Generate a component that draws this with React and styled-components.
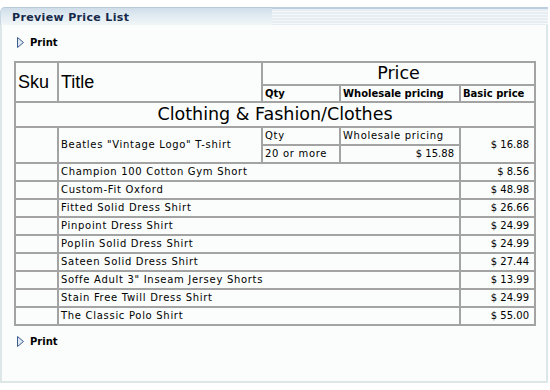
import React from "react";
import styled, { createGlobalStyle } from "styled-components";

const Global = createGlobalStyle`
  html, body { margin: 0; padding: 0; background: #ffffff; }
  body { font-family: "DejaVu Sans", Verdana, sans-serif; font-size: 10px; color: #000; }
`;

const Window = styled.div`
  width: 548px;
  margin-top: 7px;
`;

const Header = styled.div`
  display: flex;
  height: 18px;
`;

const Tab = styled.div`
  width: 272px;
  border-top-left-radius: 5px;
  border-top: 1px solid #b7cadc;
  border-left: 1px solid #c9d7e2;
  background: linear-gradient(#d0deea, #e4edf3 55%, #f1f6f7);
  display: flex;
  align-items: center;
  padding-left: 11px;
  box-sizing: border-box;
`;

const TitleText = styled.span`
  font-family: "DejaVu Sans", Verdana, sans-serif;
  font-weight: bold;
  font-size: 11px;
  letter-spacing: 0.35px;
  color: #16294a;
  margin-top: 1px;
`;

const Strip = styled.div`
  flex: 1;
  border-top: 2px solid #bccfe0;
  background: repeating-linear-gradient(
    #e6eef3 0px,
    #e6eef3 2px,
    #f5f8f9 2px,
    #f5f8f9 3px
  );
`;

const Body = styled.div`
  border: 2px solid #dde7e7;
  border-top: none;
  background: #fafdfb;
  padding: 10px 0 33px 12px;
`;

const PrintLink = styled.a`
  display: flex;
  align-items: center;
  gap: 6px;
  padding-left: 3px;
  height: 14px;
  font-weight: bold;
  font-size: 10px;
  color: #000;
  text-decoration: none;
  cursor: pointer;
`;

const Table = styled.table`
  table-layout: fixed;
  width: 522px;
  border-collapse: separate;
  border-spacing: 0;
  border: 1px solid #a3a3a3;
  margin: ${(p) => p.$margin || "0"};
`;

const Cell = styled.td`
  border: 1px solid #a3a3a3;
  padding: 1px ${(p) => (p.$right ? "5px" : "2px")};
  line-height: 14px;
  height: 14px;
  text-align: ${(p) => (p.$right ? "right" : "left")};
  letter-spacing: ${(p) => (p.$right ? "0" : "0.7px")};
  white-space: nowrap;
  overflow: hidden;
  font-size: 10px;
`;

const BigHead = styled.th`
  border: 1px solid #a3a3a3;
  font-family: ${(p) =>
    p.$center ? '"DejaVu Sans", Verdana, sans-serif' : '"Liberation Sans", Arial, sans-serif'};
  font-weight: normal;
  font-size: ${(p) => (p.$center ? "17.5px" : "18px")};
  line-height: ${(p) => (p.$lh ? p.$lh : "19px")};
  padding: 1px 2px;
  text-align: ${(p) => (p.$center ? "center" : "left")};
`;

const SmallHead = styled.th`
  border: 1px solid #a3a3a3;
  font-weight: bold;
  font-size: 10px;
  line-height: 13px;
  padding: 1px 2px;
  text-align: left;
  white-space: nowrap;
`;

const Arrow = () => (
  <svg width="7" height="11" viewBox="0 0 7 11">
    <path d="M0.5 0.5 L6.5 5.5 L0.5 10.5 Z" fill="#dfe8f3" stroke="#3d5d8c" strokeWidth="1" />
  </svg>
);

const products = [
  ["Champion 100 Cotton Gym Short", "$ 8.56"],
  ["Custom-Fit Oxford", "$ 48.98"],
  ["Fitted Solid Dress Shirt", "$ 26.66"],
  ["Pinpoint Dress Shirt", "$ 24.99"],
  ["Poplin Solid Dress Shirt", "$ 24.99"],
  ["Sateen Solid Dress Shirt", "$ 27.44"],
  ['Soffe Adult 3" Inseam Jersey Shorts', "$ 13.99"],
  ["Stain Free Twill Dress Shirt", "$ 24.99"],
  ["The Classic Polo Shirt", "$ 55.00"],
];

export default function App() {
  return (
    <>
      <Global />
      <Window>
        <Header>
          <Tab>
            <TitleText>Preview Price List</TitleText>
          </Tab>
          <Strip />
        </Header>
        <Body>
          <PrintLink>
            <Arrow />
            Print
          </PrintLink>
          <Table $margin="12px 0 8px 0">
            <colgroup>
              <col style={{ width: 43 }} />
              <col style={{ width: 204 }} />
              <col style={{ width: 78 }} />
              <col style={{ width: 120 }} />
              <col style={{ width: 75 }} />
            </colgroup>
            <thead>
              <tr>
                <BigHead rowSpan={2}>Sku</BigHead>
                <BigHead rowSpan={2}>Title</BigHead>
                <BigHead colSpan={3} $center>Price</BigHead>
              </tr>
              <tr>
                <SmallHead>Qty</SmallHead>
                <SmallHead>Wholesale pricing</SmallHead>
                <SmallHead>Basic price</SmallHead>
              </tr>
            </thead>
            <tbody>
              <tr>
                <BigHead colSpan={5} $center $lh="21px">Clothing &amp; Fashion/Clothes</BigHead>
              </tr>
              <tr>
                <Cell rowSpan={2} />
                <Cell rowSpan={2}>Beatles "Vintage Logo" T-shirt</Cell>
                <Cell>Qty</Cell>
                <Cell>Wholesale pricing</Cell>
                <Cell rowSpan={2} $right>$ 16.88</Cell>
              </tr>
              <tr>
                <Cell>20 or more</Cell>
                <Cell $right>$ 15.88</Cell>
              </tr>
              {products.map(([name, price]) => (
                <tr key={name}>
                  <Cell />
                  <Cell colSpan={3}>{name}</Cell>
                  <Cell $right>{price}</Cell>
                </tr>
              ))}
            </tbody>
          </Table>
          <PrintLink>
            <Arrow />
            Print
          </PrintLink>
        </Body>
      </Window>
    </>
  );
}
